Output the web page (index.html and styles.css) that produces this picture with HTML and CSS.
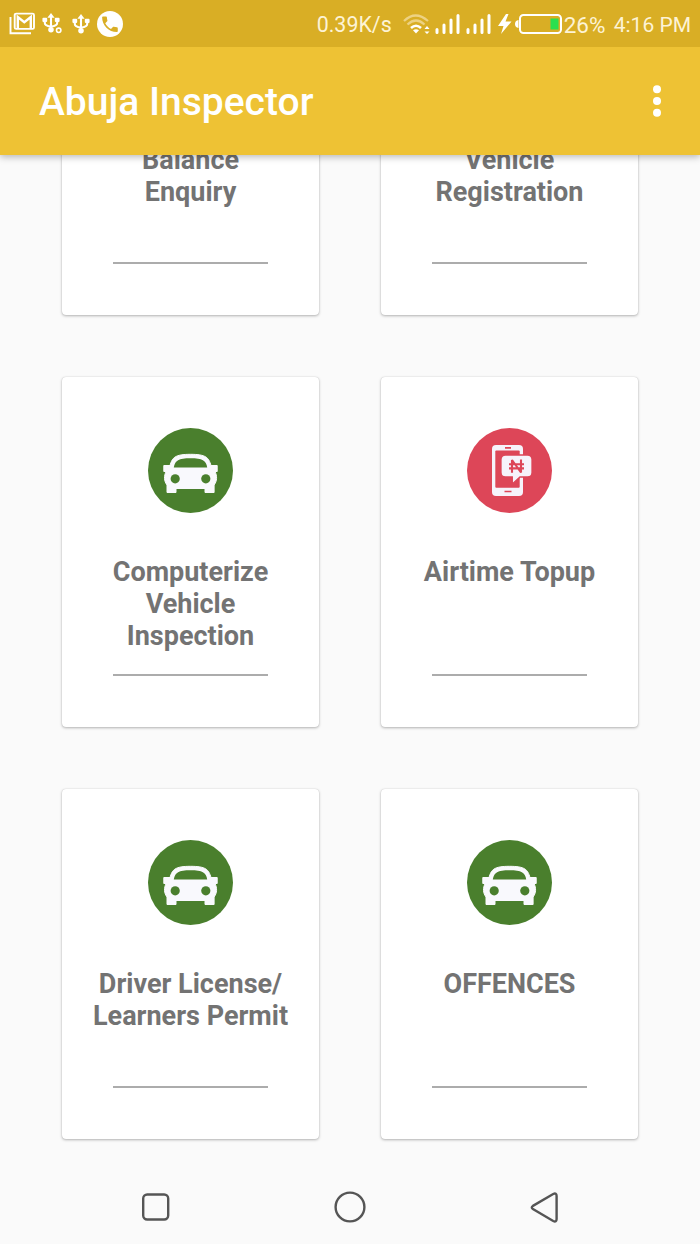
FILE: index.html
```html
<!DOCTYPE html>
<html lang="en">

<head>
  <meta charset="utf-8">
  <title>Abuja Inspector</title>
  <link rel="stylesheet" href="styles.css">
</head>

<body>
  <!-- shared icons -->
  <svg class="sprite" width="0" height="0">
    <symbol id="usb" viewBox="0 0 18 21">
      <path d="M9 3v14M2.500 7v3.500q0 3 6.500 3.800q6.500-.8 6.500-3.800V7" fill="none" stroke="#fff" stroke-width="2.200"/>
      <path d="M9 0l3.800 5H5.200z" fill="#fff"/>
      <rect x="0" y="5" width="5" height="4.500" rx="1" fill="#fff"/>
      <rect x="13" y="5" width="5" height="4.500" rx="1" fill="#fff"/>
      <circle cx="9" cy="17.500" r="2.900" fill="#fff"/>
    </symbol>
    <symbol id="signal" viewBox="0 0 25 20">
      <path d="M2 15.500v3M9 11v7.500M16 6v12.500M23 1.500v17" fill="none" stroke="#fff" stroke-width="3" stroke-linecap="round"/>
    </symbol>
    <symbol id="car" viewBox="0 0 85 85">
      <circle cx="42.500" cy="42.500" r="42.500" fill="#4a7f2d"/>
      <path d="M15.800 37.500h6.200c2.300-8 5-11.200 20.500-11.200s18.200 3.200 20.500 11.200h6.200v6h-2.200c2.300 4.500 2.200 9.500-.9 13.500v7.500H57v-4H28v4h-9V57c-3.100-4-3.200-9-.9-13.500h-2.300z" fill="#f9f9fd" stroke="#f9f9fd" stroke-linejoin="round"/>
      <path d="M25.800 39.500c1.200-7 4.700-9.200 16.700-9.200s15.500 2.200 16.700 9.200z" fill="#4a7f2d"/>
      <circle cx="27.200" cy="50.800" r="4.600" fill="#4a7f2d"/>
      <circle cx="57.800" cy="50.800" r="4.600" fill="#4a7f2d"/>
    </symbol>
  </svg>

  <div class="status-bar">
    <div class="notifications">
      <svg width="26" height="23" viewBox="0 0 26 23">
        <path d="M1.500 5v16.200h20.500" fill="none" stroke="#fff" stroke-width="1.900"/>
        <rect x="5.700" y="1.600" width="19.300" height="15.300" rx="1.500" fill="none" stroke="#fff" stroke-width="1.900"/>
        <path d="M8.800 16V5l6.500 5.200L21.800 5v11" fill="none" stroke="#fff" stroke-width="2.400"/>
      </svg>
      <svg class="usb-debug" width="20" height="21" viewBox="0 0 20 21">
        <use href="#usb" width="18" height="20"/>
        <circle cx="16.700" cy="17.300" r="3.900" fill="#d9ae25"/>
        <circle cx="16.700" cy="17.300" r="2.200" fill="none" stroke="#fff" stroke-width="1.600"/>
      </svg>
      <svg class="usb" width="18" height="20"><use href="#usb"/></svg>
      <svg class="phone" width="26" height="26" viewBox="0 0 26 26">
        <circle cx="13" cy="13" r="13" fill="#fff"/>
        <path transform="translate(2.500 2.800) scale(.87)" d="M6.620 10.790c1.440 2.830 3.760 5.140 6.590 6.590l2.200-2.200c.27-.27.67-.36 1.020-.24 1.120.37 2.330.57 3.570.57.550 0 1 .45 1 1V20c0 .55-.45 1-1 1-9.390 0-17-7.610-17-17 0-.55.45-1 1-1h3.500c.55 0 1 .45 1 1 0 1.250.2 2.450.57 3.570.110.350.03.740-.25 1.020z" fill="#d9ae25"/>
      </svg>
    </div>
    <div class="system">
      <span class="speed">0.39K/s</span>
      <svg class="wifi" width="27" height="20" viewBox="0 0 27 20">
        <path d="M1 7q11.500-11 24 0M4.500 10.500q8.500-8 17 0" fill="none" stroke="#edd283" stroke-width="2.200"/>
        <path d="M8 14q5-4.500 10 0" fill="none" stroke="#fff" stroke-width="2.600"/>
        <path d="M10 16.200q3-2 6 0L13 19.500z" fill="#fff"/>
        <path d="M21.500 15L24 12l2.500 3zM21.500 17.500h5L24 20z" fill="#fff"/>
      </svg>
      <svg class="signal" width="25" height="20"><use href="#signal"/></svg>
      <svg class="signal" width="25" height="20"><use href="#signal"/></svg>
      <svg class="bolt" width="14" height="20" viewBox="0 0 14 20">
        <path d="M8 0L0 12h5.500L3 20 13.500 7.500H7.500L10.500 0z" fill="#fff"/>
      </svg>
      <svg class="battery" width="47" height="20" viewBox="0 0 47 20">
        <path d="M3.500 6v8Q0 13.500 0 10t3.500-4z" fill="#fff"/>
        <rect x="5" y="1" width="41" height="18" rx="3.500" fill="none" stroke="#fff" stroke-width="2"/>
        <rect x="35.500" y="4.500" width="8" height="11" fill="#2bdf4f"/>
      </svg>
      <span class="percent">26%</span>
      <span class="time">4:16 PM</span>
    </div>
  </div>

  <div class="app-bar">
    <h1>Abuja Inspector</h1>
    <svg class="more" width="8" height="32" viewBox="0 0 8 32" fill="#fff">
      <circle cx="4" cy="4.200" r="4"/>
      <circle cx="4" cy="16" r="4"/>
      <circle cx="4" cy="27.800" r="4"/>
    </svg>
  </div>

  <div class="content">
    <div class="grid">
      <div class="card">
        <svg class="icon"><use href="#car"/></svg>
        <h2>Balance<br>Enquiry</h2>
        <hr>
      </div>
      <div class="card">
        <svg class="icon"><use href="#car"/></svg>
        <h2>Vehicle<br>Registration</h2>
        <hr>
      </div>
      <div class="card">
        <svg class="icon"><use href="#car"/></svg>
        <h2>Computerize<br>Vehicle<br>Inspection</h2>
        <hr>
      </div>
      <div class="card">
        <svg class="icon" viewBox="0 0 85 85">
          <circle cx="42.500" cy="42.500" r="42.500" fill="#dd4658"/>
          <rect x="25" y="17" width="31" height="51" rx="4" fill="#f6f3fb"/>
          <rect x="28.300" y="22.500" width="24.400" height="37.300" rx="1" fill="#dd4658"/>
          <path d="M38 19.800h6M37.500 63.500h7" stroke="#dd4658" stroke-width="1.700"/>
          <path d="M38.500 27h22a4.500 4.500 0 0 1 4.500 4.500v13a4.500 4.500 0 0 1-4.500 4.500H53l-7.700 7V49h-6.800a4.500 4.500 0 0 1-4.500-4.500v-13a4.500 4.500 0 0 1 4.500-4.500z" fill="#f6f3fb" stroke="#dd4658" stroke-width="1.300"/>
          <path d="M45 44.700V32l9 12.500V31.500M42 36.200h15M42 40.400h15" fill="none" stroke="#dd4658" stroke-width="2.100" stroke-linejoin="bevel"/>
        </svg>
        <h2>Airtime Topup</h2>
        <hr>
      </div>
      <div class="card">
        <svg class="icon"><use href="#car"/></svg>
        <h2>Driver License/<br>Learners Permit</h2>
        <hr>
      </div>
      <div class="card">
        <svg class="icon"><use href="#car"/></svg>
        <h2>OFFENCES</h2>
        <hr>
      </div>
    </div>
  </div>

  <div class="nav-bar">
    <svg width="28" height="28" viewBox="0 0 28 28">
      <rect x="1.200" y="1.500" width="25" height="25" rx="4" fill="none" stroke="#555" stroke-width="2.400"/>
    </svg>
    <svg width="32" height="32" viewBox="0 0 32 32">
      <circle cx="16" cy="16" r="14.400" fill="none" stroke="#555" stroke-width="2.400"/>
    </svg>
    <svg width="28" height="32" viewBox="0 0 28 32">
      <path d="M2.900 14.900L23.200 3q3.400-1.500 3.400 2v23q0 3.500-3.400 2L2.900 18.100q-2.200-1.600 0-3.200z" fill="none" stroke="#555" stroke-width="2.400"/>
    </svg>
  </div>
</body>

</html>
```

FILE: styles.css
```css
* {
	box-sizing: border-box;
}

body {
	margin: 0;
	height: 1244px;
	display: flex;
	flex-direction: column;
	overflow: hidden;
	background: #fafafa;
	font-family: Roboto, "Liberation Sans", sans-serif;
}

svg {
	display: block;
	flex: none;
}

.sprite {
	display: none;
}

/* status bar */
.status-bar {
	flex: none;
	height: 47px;
	padding: 0 9px;
	display: flex;
	justify-content: space-between;
	align-items: center;
	background: #d9ae25;
	color: #fdf3d5;
	white-space: nowrap;
	z-index: 2;
}

.notifications,
.system {
	display: flex;
	align-items: center;
}

.usb-debug {
	margin-left: 7px;
}

.usb {
	margin-left: 10px;
}

.phone {
	margin-left: 7px;
}

.system span {
	line-height: 26px;
	padding-top: 2px;
}

.speed {
	font-size: 21.4px;
}

.wifi {
	margin-left: 11px;
}

.signal {
	margin-left: 5px;
}

.signal + .signal {
	margin-left: 6px;
}

.bolt {
	margin-left: 7px;
}

.battery {
	margin-left: 3px;
}

.percent {
	width: 43px;
	margin-left: 2px;
	font-size: 22.5px;
}

.time {
	margin-left: 7px;
	font-size: 21px;
}

/* app bar */
.app-bar {
	flex: none;
	height: 108px;
	padding: 0 39px;
	display: flex;
	justify-content: space-between;
	align-items: center;
	background: #eec234;
	box-shadow: 0 2px 7px rgba(0, 0, 0, 0.28);
	z-index: 1;
}

.app-bar h1 {
	margin: 0;
	padding-top: 1px;
	color: #fff;
	font-size: 39px;
	font-weight: 500;
	line-height: 46px;
}

/* the list is scrolled to its end */
.content {
	flex: 1;
	min-height: 0;
	padding: 0 62px 31px;
	display: flex;
	flex-direction: column;
	justify-content: flex-end;
	overflow: hidden;
}

.grid {
	flex: none;
	display: grid;
	grid-template-columns: 257px 257px;
	gap: 62px;
}

.card {
	height: 350px;
	padding-top: 51px;
	display: flex;
	flex-direction: column;
	align-items: center;
	background: #fff;
	border-radius: 4px;
	box-shadow: 0 1px 3px rgba(0, 0, 0, 0.28), 0 0 1px rgba(0, 0, 0, 0.2);
}

.icon {
	width: 85px;
	height: 85px;
}

.card h2 {
	margin: 43px 0 22px;
	height: 96px;
	color: #737373;
	font-size: 27px;
	font-weight: 700;
	line-height: 32px;
	text-align: center;
	white-space: nowrap;
}

.card hr {
	width: 155px;
	height: 2px;
	margin: 0;
	border: 0;
	background: #acacac;
}

/* navigation bar */
.nav-bar {
	flex: none;
	height: 74px;
	padding: 0 142px;
	display: flex;
	justify-content: space-between;
	align-items: center;
}
```
